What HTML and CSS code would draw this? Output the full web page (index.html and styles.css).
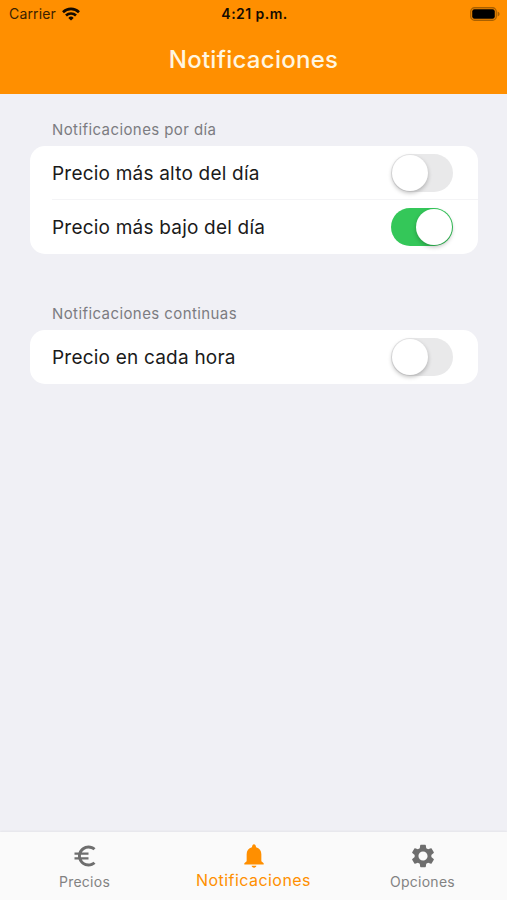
FILE: index.html
```html
<!DOCTYPE html>
<html lang="es">
<head>
    <meta charset="UTF-8">
    <meta name="viewport" content="width=device-width, initial-scale=1.0">
    <title>Notificaciones</title>
    <link rel="stylesheet" href="styles.css">
</head>
<body>
    <header class="header">
        <div class="status-bar">
            <div class="carrier">
                <span>Carrier</span>
                <svg class="wifi" viewBox="0 0 18 14" fill="none" stroke="#140b00" stroke-width="2.6">
                    <path d="M1 5.2a11.4 11.4 0 0 1 16 0"/>
                    <path d="M4 8.5a7.1 7.1 0 0 1 10 0"/>
                    <path d="M9 13.6 6.3 10.9a3.8 3.8 0 0 1 5.4 0z" fill="#140b00" stroke="none"/>
                </svg>
            </div>
            <div class="time">4:21 p.m.</div>
            <svg class="battery" viewBox="0 0 30 14">
                <rect x="0.75" y="0.75" width="25.5" height="12.5" rx="3.8" fill="none" stroke="#a96000" stroke-width="1.3"/>
                <rect x="2.2" y="2.2" width="22.6" height="9.6" rx="2.2" fill="#000"/>
                <path d="M27.6 4.6c1.3.5 2 1.4 2 2.4s-.7 1.9-2 2.4z" fill="#a96000"/>
            </svg>
        </div>
        <h1>Notificaciones</h1>
    </header>

    <main class="content">
        <section>
            <h2>Notificaciones por día</h2>
            <div class="card">
                <label class="row">
                    <span>Precio más alto del día</span>
                    <input type="checkbox" class="switch">
                </label>
                <label class="row">
                    <span>Precio más bajo del día</span>
                    <input type="checkbox" class="switch" checked>
                </label>
            </div>
        </section>
        <section>
            <h2>Notificaciones continuas</h2>
            <div class="card">
                <label class="row">
                    <span>Precio en cada hora</span>
                    <input type="checkbox" class="switch">
                </label>
            </div>
        </section>
    </main>

    <nav class="tab-bar">
        <a class="tab">
            <svg viewBox="0 0 24 24"><path d="M15 18.5c-2.51 0-4.68-1.42-5.76-3.5H15v-2H8.58c-.05-.33-.08-.66-.08-1s.03-.67.08-1H15V9H9.24C10.32 6.92 12.5 5.5 15 5.5c1.61 0 3.09.59 4.23 1.57L21 5.3C19.41 3.87 17.3 3 15 3c-3.92 0-7.24 2.51-8.48 6H3v2h3.06c-.04.33-.06.66-.06 1s.02.67.06 1H3v2h3.52c1.24 3.49 4.56 6 8.48 6 2.31 0 4.41-.87 6-2.3l-1.78-1.77c-1.13.98-2.6 1.57-4.22 1.57z"/></svg>
            <span>Precios</span>
        </a>
        <a class="tab active">
            <svg viewBox="0 0 24 24"><path d="M12 22c1.1 0 2-.7 2-1.6h-4c0 .9.89 1.6 2 1.6zm6.3-5.5v-6c0-2.9-1.6-5.2-4.5-6C13.5 2.9 13 2 12 2s-1.5.9-1.8 2.5c-2.9.8-4.5 3.1-4.5 6v6l-2 1.7v1h16.6v-1z"/></svg>
            <span>Notificaciones</span>
        </a>
        <a class="tab">
            <svg viewBox="0 0 24 24"><path d="M19.14 12.94c.04-.3.06-.61.06-.94 0-.32-.02-.64-.07-.94l2.03-1.58c.18-.14.23-.41.12-.61l-1.92-3.32c-.12-.22-.37-.29-.59-.22l-2.39.96c-.5-.38-1.03-.7-1.62-.94l-.36-2.54c-.04-.24-.24-.41-.48-.41h-3.84c-.24 0-.43.17-.47.41l-.36 2.54c-.59.24-1.13.57-1.62.94l-2.39-.96c-.22-.08-.47 0-.59.22L2.74 8.87c-.12.21-.08.47.12.61l2.03 1.58c-.05.3-.09.63-.09.94s.02.64.07.94l-2.03 1.58c-.18.14-.23.41-.12.61l1.92 3.32c.12.22.37.29.59.22l2.39-.96c.5.38 1.03.7 1.62.94l.36 2.54c.05.24.24.41.48.41h3.84c.24 0 .44-.17.47-.41l.36-2.54c.59-.24 1.13-.56 1.62-.94l2.39.96c.22.08.47 0 .59-.22l1.92-3.32c.12-.22.07-.47-.12-.61l-2.01-1.58zM12 15.9c-2.15 0-3.9-1.75-3.9-3.9s1.75-3.9 3.9-3.9 3.9 1.75 3.9 3.9-1.75 3.9-3.9 3.9z"/></svg>
            <span>Opciones</span>
        </a>
    </nav>
</body>
</html>
```
FILE: styles.css
```css
:root {
    --primary: #ff8f00;
    --background: #f0f0f5;
    --text: #1a1a1a;
    --text-light: #7c7c81;
    --tab: #6e6e6e;
    --green: #34c759;
}
* {
    box-sizing: border-box;
}
body {
    margin: 0;
    height: 100vh;
    display: flex;
    flex-direction: column;
    font-family: Inter, Roboto, sans-serif;
    background-color: var(--background);
    color: var(--text);
}
.header {
    height: 94px;
    background-color: var(--primary);
}
.status-bar {
    display: grid;
    grid-template-columns: 1fr auto 1fr;
    align-items: center;
    height: 27px;
    padding: 0 7px 0 9px;
    font-size: 14px;
    color: #140b00;
}
.carrier {
    display: flex;
    align-items: center;
    gap: 6px;
    letter-spacing: 0.15px;
    color: #3a2100;
}
.wifi {
    width: 18px;
    height: 14px;
}
.time {
    font-weight: 600;
    letter-spacing: 0.45px;
}
.battery {
    justify-self: end;
    width: 30px;
    height: 14px;
}
h1 {
    margin: 0;
    line-height: 66px;
    text-align: center;
    font-size: 24px;
    font-weight: 500;
    letter-spacing: 0.28px;
    color: #fff6e0;
}
.content {
    flex: 1;
    padding: 22px 29px 0 30px;
}
section {
    margin-bottom: 46px;
}
h2 {
    margin: 0;
    padding: 0 22px;
    height: 30px;
    line-height: 28px;
    font-size: 15px;
    font-weight: 400;
    letter-spacing: 0.41px;
    color: var(--text-light);
}
.card {
    padding-left: 22px;
    background-color: #fff;
    border-radius: 15px;
}
.row {
    display: flex;
    align-items: center;
    justify-content: space-between;
    height: 54px;
    padding-right: 25px;
    font-size: 19px;
    letter-spacing: 0.21px;
}
.row + .row {
    box-shadow: 0 -1px #f4f4f6;
}
.switch {
    appearance: none;
    display: flex;
    width: 62px;
    height: 38px;
    margin: 0;
    padding: 1px;
    border-radius: 19px;
    background-color: #e9e9ea;
}
.switch::before {
    content: "";
    width: 36px;
    height: 36px;
    border-radius: 50%;
    background-color: #fff;
    box-shadow: 0 2px 4px rgba(0, 0, 0, 0.25);
}
.switch:checked {
    justify-content: flex-end;
    background-color: var(--green);
}
.tab-bar {
    display: flex;
    height: 68px;
    background-color: #fafafa;
    box-shadow: 0 -1px 2px rgba(0, 0, 0, 0.05);
}
.tab {
    flex: 1;
    display: flex;
    flex-direction: column;
    align-items: center;
    padding-top: 10px;
    font-size: 14px;
    line-height: 24px;
    letter-spacing: 0.25px;
    color: var(--tab);
}
.tab span {
    opacity: 0.85;
}
.tab svg {
    width: 28px;
    height: 28px;
    fill: currentColor;
}
.tab.active {
    font-size: 16px;
    line-height: 21px;
    letter-spacing: 0.45px;
    color: var(--primary);
}
.tab.active span {
    opacity: 1;
}
```
